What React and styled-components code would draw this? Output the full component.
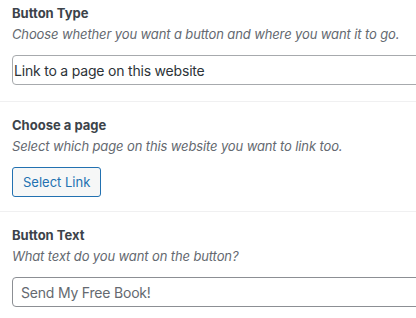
import React from "react";
import styled, { createGlobalStyle } from "styled-components";

const Global = createGlobalStyle`
  html, body { margin: 0; padding: 0; background: #ffffff; }
  body {
    font-family: Inter, "Liberation Sans", Arial, sans-serif;
    color: #3c434a;
    overflow: hidden;
  }
`;

const Panel = styled.div`
  display: flex;
  flex-direction: column;
  width: 416px;
  height: 318px;
  overflow: hidden;
`;

const Section = styled.section`
  padding: ${(p) => (p.$first ? "4px" : "14px")} 0 ${(p) => (p.$first ? "16px" : p.$last ? "0" : "14px")} 12px;
  border-bottom: ${(p) => (p.$last ? "none" : "1px solid #f0f0f1")};
  display: flex;
  flex-direction: column;
  align-items: flex-start;
`;

const Title = styled.div`
  font-size: 13px;
  font-weight: 700;
  line-height: 18px;
  color: #3c434a;
`;

const Desc = styled.div`
  margin-top: 3px;
  font-size: 13px;
  font-style: italic;
  line-height: 18px;
  letter-spacing: -0.12px;
  color: #646970;
  margin-bottom: 12px;
`;

const Field = styled.div`
  box-sizing: border-box;
  width: calc(100% + 24px);
  height: 30px;
  border: 1px solid ${(p) => (p.$muted ? "#8c8f94" : "#a7aaad")};
  border-radius: 4px;
  display: flex;
  align-items: center;
  padding-left: ${(p) => (p.$muted ? "8px" : "1px")};
  font-size: 14px;
  letter-spacing: -0.2px;
  color: ${(p) => (p.$muted ? "#646970" : "#2c3338")};
  background: #fff;
`;

const Button = styled.button`
  box-sizing: border-box;
  height: 30px;
  padding: 0 10px;
  border: 1px solid #2271b1;
  border-radius: 3px;
  background: #f6f7f7;
  color: #2271b1;
  font-family: Inter, "Liberation Sans", Arial, sans-serif;
  font-size: 13px;
  line-height: 28px;
  cursor: pointer;
`;

export default function App() {
  return (
    <>
      <Global />
      <Panel>
        <Section $first>
          <Title>Button Type</Title>
          <Desc>Choose whether you want a button and where you want it to go.</Desc>
          <Field>Link to a page on this website</Field>
        </Section>
        <Section>
          <Title>Choose a page</Title>
          <Desc>Select which page on this website you want to link too.</Desc>
          <Button>Select Link</Button>
        </Section>
        <Section $last>
          <Title>Button Text</Title>
          <Desc>What text do you want on the button?</Desc>
          <Field $muted>Send My Free Book!</Field>
        </Section>
      </Panel>
    </>
  );
}
